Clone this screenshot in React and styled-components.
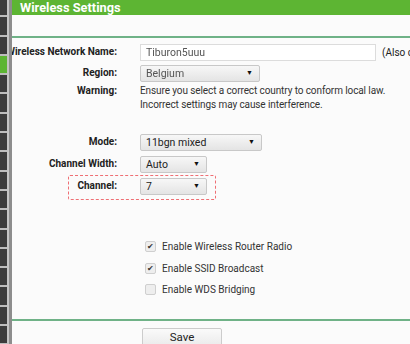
import React from 'react';
import styled, { createGlobalStyle } from 'styled-components';

const GlobalStyle = createGlobalStyle`
    html, body {
        margin: 0;
        padding: 0;
        background: #fbfbfb;
        font-family: Roboto, "Liberation Sans", sans-serif;
        color: #222222;
    }
`;

const menuCells = Array.from({ length: 18 }, (_, i) => i);

export default function App() {
    return (
        <Page>
            <GlobalStyle />
            <Sidebar>
                <Cells>
                    {menuCells.map((i) => (
                        <Cell key={i} active={i === 3} />
                    ))}
                </Cells>
                <LightStripe />
                <DarkStripe />
            </Sidebar>
            <Main>
                <Header>Wireless Settings</Header>
                <Divider />
                <Form>
                    <Row>
                        <Label>Wireless Network Name:</Label>
                        <TextInput>
                            <Blurred>Tiburon5uuu</Blurred>
                        </TextInput>
                        <Note>(Also called the SSID)</Note>
                    </Row>
                    <Row top={4}>
                        <Label>Region:</Label>
                        <Select width={120}>
                            <Blurred>Belgium</Blurred>
                            <Arrow>▼</Arrow>
                        </Select>
                    </Row>
                    <Row top={2} align="flex-start">
                        <Label>Warning:</Label>
                        <Warning>
                            Ensure you select a correct country to conform local law.
                            <br />
                            Incorrect settings may cause interference.
                        </Warning>
                    </Row>
                    <Row top={22}>
                        <Label>Mode:</Label>
                        <Select width={122}>
                            11bgn mixed
                            <Arrow>▼</Arrow>
                        </Select>
                    </Row>
                    <Row top={5}>
                        <Label>Channel Width:</Label>
                        <Select width={67}>
                            Auto
                            <Arrow>▼</Arrow>
                        </Select>
                    </Row>
                    <Row top={5} highlighted>
                        <Label>Channel:</Label>
                        <Select width={67}>
                            7
                            <Arrow>▼</Arrow>
                        </Select>
                    </Row>
                </Form>
                <Checks>
                    <CheckRow>
                        <Box>✔</Box>
                        Enable Wireless Router Radio
                    </CheckRow>
                    <CheckRow>
                        <Box>✔</Box>
                        Enable SSID Broadcast
                    </CheckRow>
                    <CheckRow>
                        <Box />
                        Enable WDS Bridging
                    </CheckRow>
                </Checks>
                <Divider />
                <Footer>
                    <Button>Save</Button>
                </Footer>
            </Main>
        </Page>
    );
};

const Page = styled.div`
    display: flex;
    width: 410px;
    height: 344px;
    overflow: hidden;
`;

const Sidebar = styled.div`
    display: flex;
    flex-shrink: 0;
    height: 344px;
`;

const Cells = styled.div`
    width: 7px;
    display: flex;
    flex-direction: column;
    background: #bdbdbd;
    gap: 2px;
    margin-top: -2px;
`;

const Cell = styled.div`
    height: 17.3px;
    flex-shrink: 0;
    background: ${(p) => (p.active ? '#5cb533' : '#3b3b3b')};
`;

const LightStripe = styled.div`
    width: 2px;
    background: #c4c4c4;
`;

const DarkStripe = styled.div`
    width: 3px;
    background: #8d8d8d;
`;

const Main = styled.div`
    flex: 1;
    min-width: 0;
    display: flex;
    flex-direction: column;
    overflow: hidden;
`;

const Header = styled.div`
    height: 17px;
    background: #5db533;
    color: #ffffff;
    font-weight: 700;
    font-size: 12.8px;
    line-height: 15px;
    padding-left: 8px;
    margin-bottom: 21px;
`;

const Divider = styled.div`
    height: 1.5px;
    background: #6fb287;
    flex-shrink: 0;
`;

const Form = styled.div`
    display: flex;
    flex-direction: column;
    padding-top: 6px;
`;

const Row = styled.div`
    position: relative;
    display: flex;
    align-items: ${(p) => p.align || 'center'};
    margin-top: ${(p) => p.top || 0}px;
    font-size: 10px;
    &::after {
        content: '';
        display: ${(p) => (p.highlighted ? 'block' : 'none')};
        position: absolute;
        left: 56px;
        width: 146px;
        top: -3px;
        bottom: -5px;
        border: 1.5px dashed #ef6f74;
        border-radius: 2px;
        pointer-events: none;
    }
`;

const Label = styled.div`
    width: 105px;
    flex-shrink: 0;
    display: flex;
    justify-content: flex-end;
    white-space: nowrap;
    font-weight: 700;
    margin-right: 23px;
    line-height: 14px;
`;

const TextInput = styled.div`
    width: 236px;
    height: 17px;
    box-sizing: border-box;
    border: 1px solid #dcdcdc;
    background: #ffffff;
    padding-left: 5px;
    display: flex;
    align-items: center;
    flex-shrink: 0;
    font-size: 10.5px;
`;

const Blurred = styled.span`
    filter: blur(0.7px);
    color: #555555;
`;

const Note = styled.span`
    margin-left: 6px;
    white-space: nowrap;
`;

const Select = styled.div`
    width: ${(p) => p.width}px;
    height: 17px;
    box-sizing: border-box;
    border: 1px solid #c8c8c8;
    border-radius: 2px;
    background: linear-gradient(#f7f7f7, #e4e4e4);
    padding: 0 6px 0 5px;
    display: flex;
    align-items: center;
    justify-content: space-between;
    flex-shrink: 0;
    font-size: 10.5px;
`;

const Arrow = styled.span`
    font-size: 7px;
    color: #111111;
`;

const Warning = styled.div`
    line-height: 14px;
    white-space: nowrap;
    letter-spacing: -0.1px;
    color: #333333;
`;

const Checks = styled.div`
    display: flex;
    flex-direction: column;
    gap: 7px;
    padding: 45px 0 22px 133px;
    font-size: 10px;
    color: #333333;
`;

const CheckRow = styled.label`
    display: flex;
    align-items: center;
    gap: 6px;
    height: 14.5px;
    white-space: nowrap;
`;

const Box = styled.span`
    width: 11px;
    height: 11px;
    box-sizing: border-box;
    border: 1px solid #cfcfcf;
    border-radius: 2px;
    background: #eeeeee;
    display: flex;
    align-items: center;
    justify-content: center;
    font-size: 8px;
    color: #333333;
`;

const Footer = styled.div`
    padding: 5px 0 0 130px;
`;

const Button = styled.button`
    width: 80px;
    height: 24px;
    border: 1px solid #cccccc;
    border-radius: 2px;
    background: linear-gradient(#fafafa, #e6e6e6);
    font-family: Roboto, "Liberation Sans", sans-serif;
    font-size: 11.5px;
    color: #222222;
    padding: 0 0 6px;
`;
